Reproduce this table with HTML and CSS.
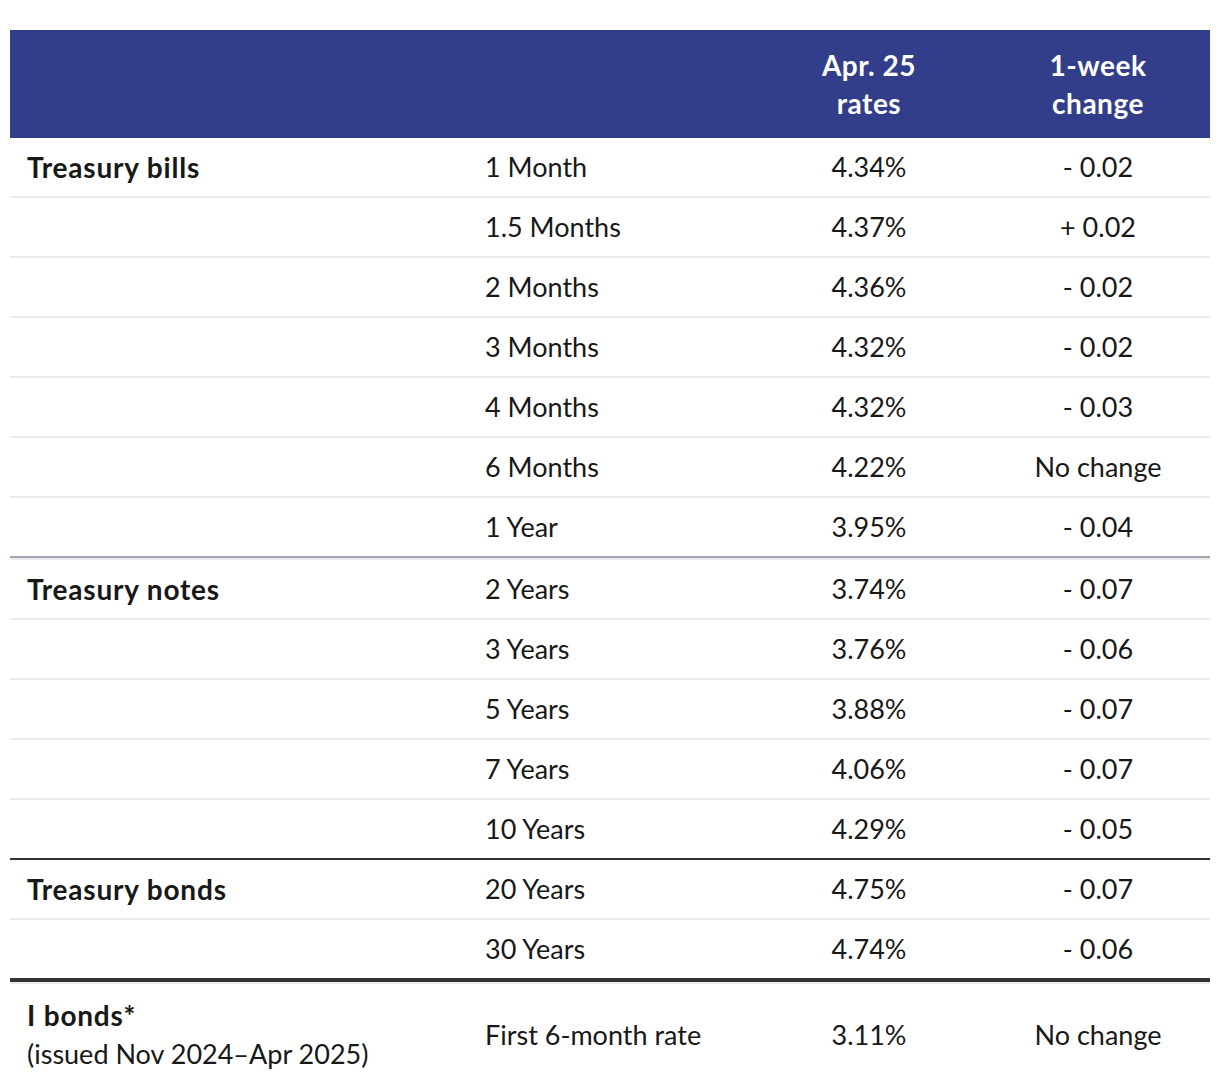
FILE: index.html
```html
<!DOCTYPE html>
<html lang="en">
<head>
<meta charset="utf-8">
<title>Treasury rates</title>
<link rel="stylesheet" href="styles.css">
</head>
<body>
<div class="rates">
  <div class="head">
    <div class="cell"></div>
    <div class="cell"></div>
    <div class="cell c">Apr. 25<br>rates</div>
    <div class="cell c">1-week<br>change</div>
  </div>

  <div class="group">
    <div class="row"><div class="cell name">Treasury bills</div><div class="cell">1 Month</div><div class="cell c">4.34%</div><div class="cell c">- 0.02</div></div>
    <div class="row"><div class="cell name"></div><div class="cell">1.5 Months</div><div class="cell c">4.37%</div><div class="cell c">+ 0.02</div></div>
    <div class="row"><div class="cell name"></div><div class="cell">2 Months</div><div class="cell c">4.36%</div><div class="cell c">- 0.02</div></div>
    <div class="row"><div class="cell name"></div><div class="cell">3 Months</div><div class="cell c">4.32%</div><div class="cell c">- 0.02</div></div>
    <div class="row"><div class="cell name"></div><div class="cell">4 Months</div><div class="cell c">4.32%</div><div class="cell c">- 0.03</div></div>
    <div class="row"><div class="cell name"></div><div class="cell">6 Months</div><div class="cell c">4.22%</div><div class="cell c">No change</div></div>
    <div class="row end-gray"><div class="cell name"></div><div class="cell">1 Year</div><div class="cell c">3.95%</div><div class="cell c">- 0.04</div></div>
  </div>

  <div class="group top-light">
    <div class="row"><div class="cell name">Treasury notes</div><div class="cell">2 Years</div><div class="cell c">3.74%</div><div class="cell c">- 0.07</div></div>
    <div class="row"><div class="cell name"></div><div class="cell">3 Years</div><div class="cell c">3.76%</div><div class="cell c">- 0.06</div></div>
    <div class="row"><div class="cell name"></div><div class="cell">5 Years</div><div class="cell c">3.88%</div><div class="cell c">- 0.07</div></div>
    <div class="row"><div class="cell name"></div><div class="cell">7 Years</div><div class="cell c">4.06%</div><div class="cell c">- 0.07</div></div>
    <div class="row end-dark"><div class="cell name"></div><div class="cell">10 Years</div><div class="cell c">4.29%</div><div class="cell c">- 0.05</div></div>
  </div>

  <div class="group">
    <div class="row"><div class="cell name">Treasury bonds</div><div class="cell">20 Years</div><div class="cell c">4.75%</div><div class="cell c">- 0.07</div></div>
    <div class="row end-thick"><div class="cell name"></div><div class="cell">30 Years</div><div class="cell c">4.74%</div><div class="cell c">- 0.06</div></div>
  </div>

  <div class="group top-light">
    <div class="row tall"><div class="cell name"><strong>I bonds*</strong><br><span class="sub">(issued Nov 2024–Apr 2025)</span></div><div class="cell">First 6-month rate</div><div class="cell c">3.11%</div><div class="cell c">No change</div></div>
  </div>
</div>
</body>
</html>
```

FILE: styles.css
```css
html, body {
  margin: 0;
  padding: 0;
  background: #ffffff;
}

body {
  font-family: Lato, "Noto Sans", sans-serif;
  font-size: 27px;
  line-height: 38px;
  color: #181818;
}

.rates {
  margin: 30px 10px 0 10px;
  width: 1200px;
}

.head,
.row {
  display: grid;
  grid-template-columns: 458px 284px 234px 224px;
  align-items: center;
}

.head {
  background: #333e8a;
  color: #ffffff;
  font-weight: 700;
  font-size: 28px;
  letter-spacing: 0.5px;
  height: 108px;
  box-sizing: border-box;
  padding: 16px 0;
}

.cell {
  padding: 0 17px;
}

.cell.c {
  text-align: center;
  padding: 0;
}

.row {
  height: 60px;
  box-sizing: border-box;
  padding: 10px 0;
  border-bottom: 2px solid #ebebeb;
}

.name {
  font-weight: 700;
  font-size: 28px;
  letter-spacing: 0.8px;
}

.name strong {
  font-weight: 700;
}

.name .sub {
  font-weight: 400;
  font-size: 27px;
  letter-spacing: 0;
}

.row.end-gray {
  border-bottom-color: #a3a5b3;
}

.row.end-dark {
  border-bottom-color: #333333;
}

.row.end-thick {
  border-bottom: 4px solid #333333;
  height: 62px;
}

.top-light {
  border-top: 2px solid #ebebeb;
}

.row.tall {
  height: auto;
  padding: 12px 0;
  border-bottom: none;
}
```
